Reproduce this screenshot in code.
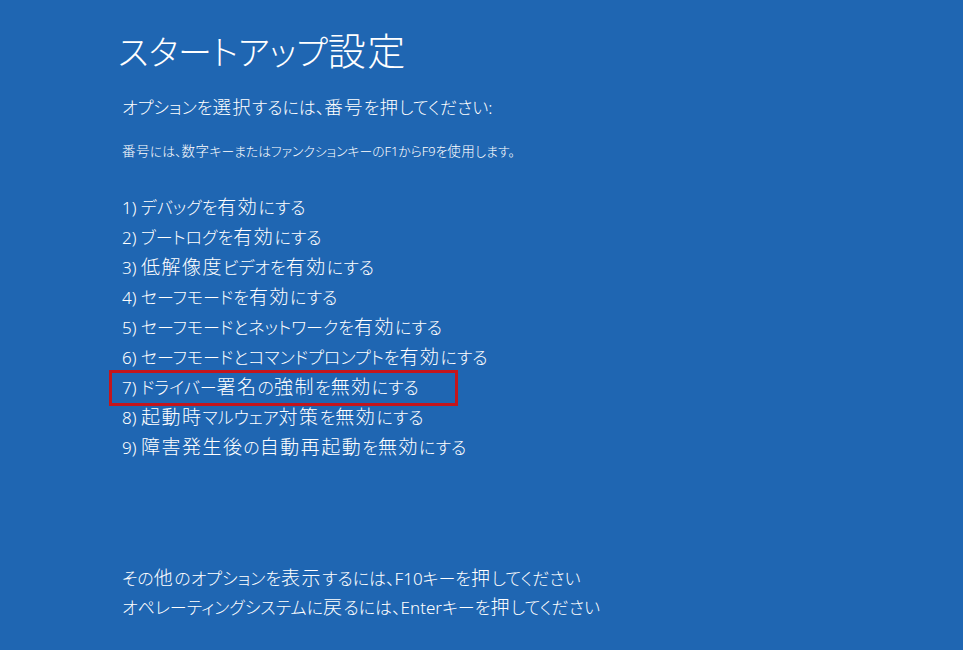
import React from 'react';

const OPTIONS = [
  'デバッグを有効にする',
  'ブートログを有効にする',
  '低解像度ビデオを有効にする',
  'セーフモードを有効にする',
  'セーフモードとネットワークを有効にする',
  'セーフモードとコマンドプロンプトを有効にする',
  'ドライバー署名の強制を無効にする',
  '起動時マルウェア対策を無効にする',
  '障害発生後の自動再起動を無効にする',
];

// kana in the boot screen font are narrow, kanji are full width
function Jp({ text, kanji }: { text: string; kanji: string }) {
  const parts = text.match(/[\u4e00-\u9fff]+|[^\u4e00-\u9fff]+/g) ?? [];
  return (
    <>
      {parts.map((p, i) =>
        /[\u4e00-\u9fff]/.test(p) ? (
          <span key={i} className={kanji}>
            {p}
          </span>
        ) : (
          <React.Fragment key={i}>{p}</React.Fragment>
        )
      )}
    </>
  );
}

const K = 'text-[19px] tracking-[1.5px]';

export default function App() {
  return (
    <div className="w-[963px] h-[650px] overflow-hidden bg-[#1f66b2] text-white font-light font-['Noto_Sans','Noto_Sans_CJK_JP',sans-serif] [font-feature-settings:'palt']">
      <div className="pl-[118px] pt-[22px]">
        <h1 className="text-[34px] leading-[56px] font-light">
          <Jp text="スタートアップ設定" kanji="text-[38px] tracking-[1.5px]" />
        </h1>

        <p className="mt-[14px] pl-[4px] text-[17px] leading-[26px]">
          <Jp text="オプションを選択するには、番号を押してください:" kanji="text-[18.5px] tracking-[1.2px]" />
        </p>
        <p className="mt-[21px] pl-[4px] text-[12.8px] leading-[18px]">
          <Jp text="番号には、数字キーまたはファンクションキーのF1からF9を使用します。" kanji="text-[13.5px] tracking-[0.5px]" />
        </p>

        <ul className="mt-[32px] pl-[4px] text-[17px]">
          {OPTIONS.map((o, i) => (
            <li key={i} className="h-[30px] leading-[30px] relative">
              {i === 6 && (
                <span className="absolute left-[-13px] top-[-2px] w-[349px] h-[36px] border-[3px] border-[#c4151c]" />
              )}
              {i + 1}) <Jp text={o} kanji={K} />
            </li>
          ))}
        </ul>

        <div className="mt-[102px] pl-[4px] text-[17px]">
          <p className="leading-[29px]">
            <Jp text="その他のオプションを表示するには、F10キーを押してください" kanji={K} />
          </p>
          <p className="leading-[29px]">
            <Jp text="オペレーティングシステムに戻るには、Enterキーを押してください" kanji={K} />
          </p>
        </div>
      </div>
    </div>
  );
}
